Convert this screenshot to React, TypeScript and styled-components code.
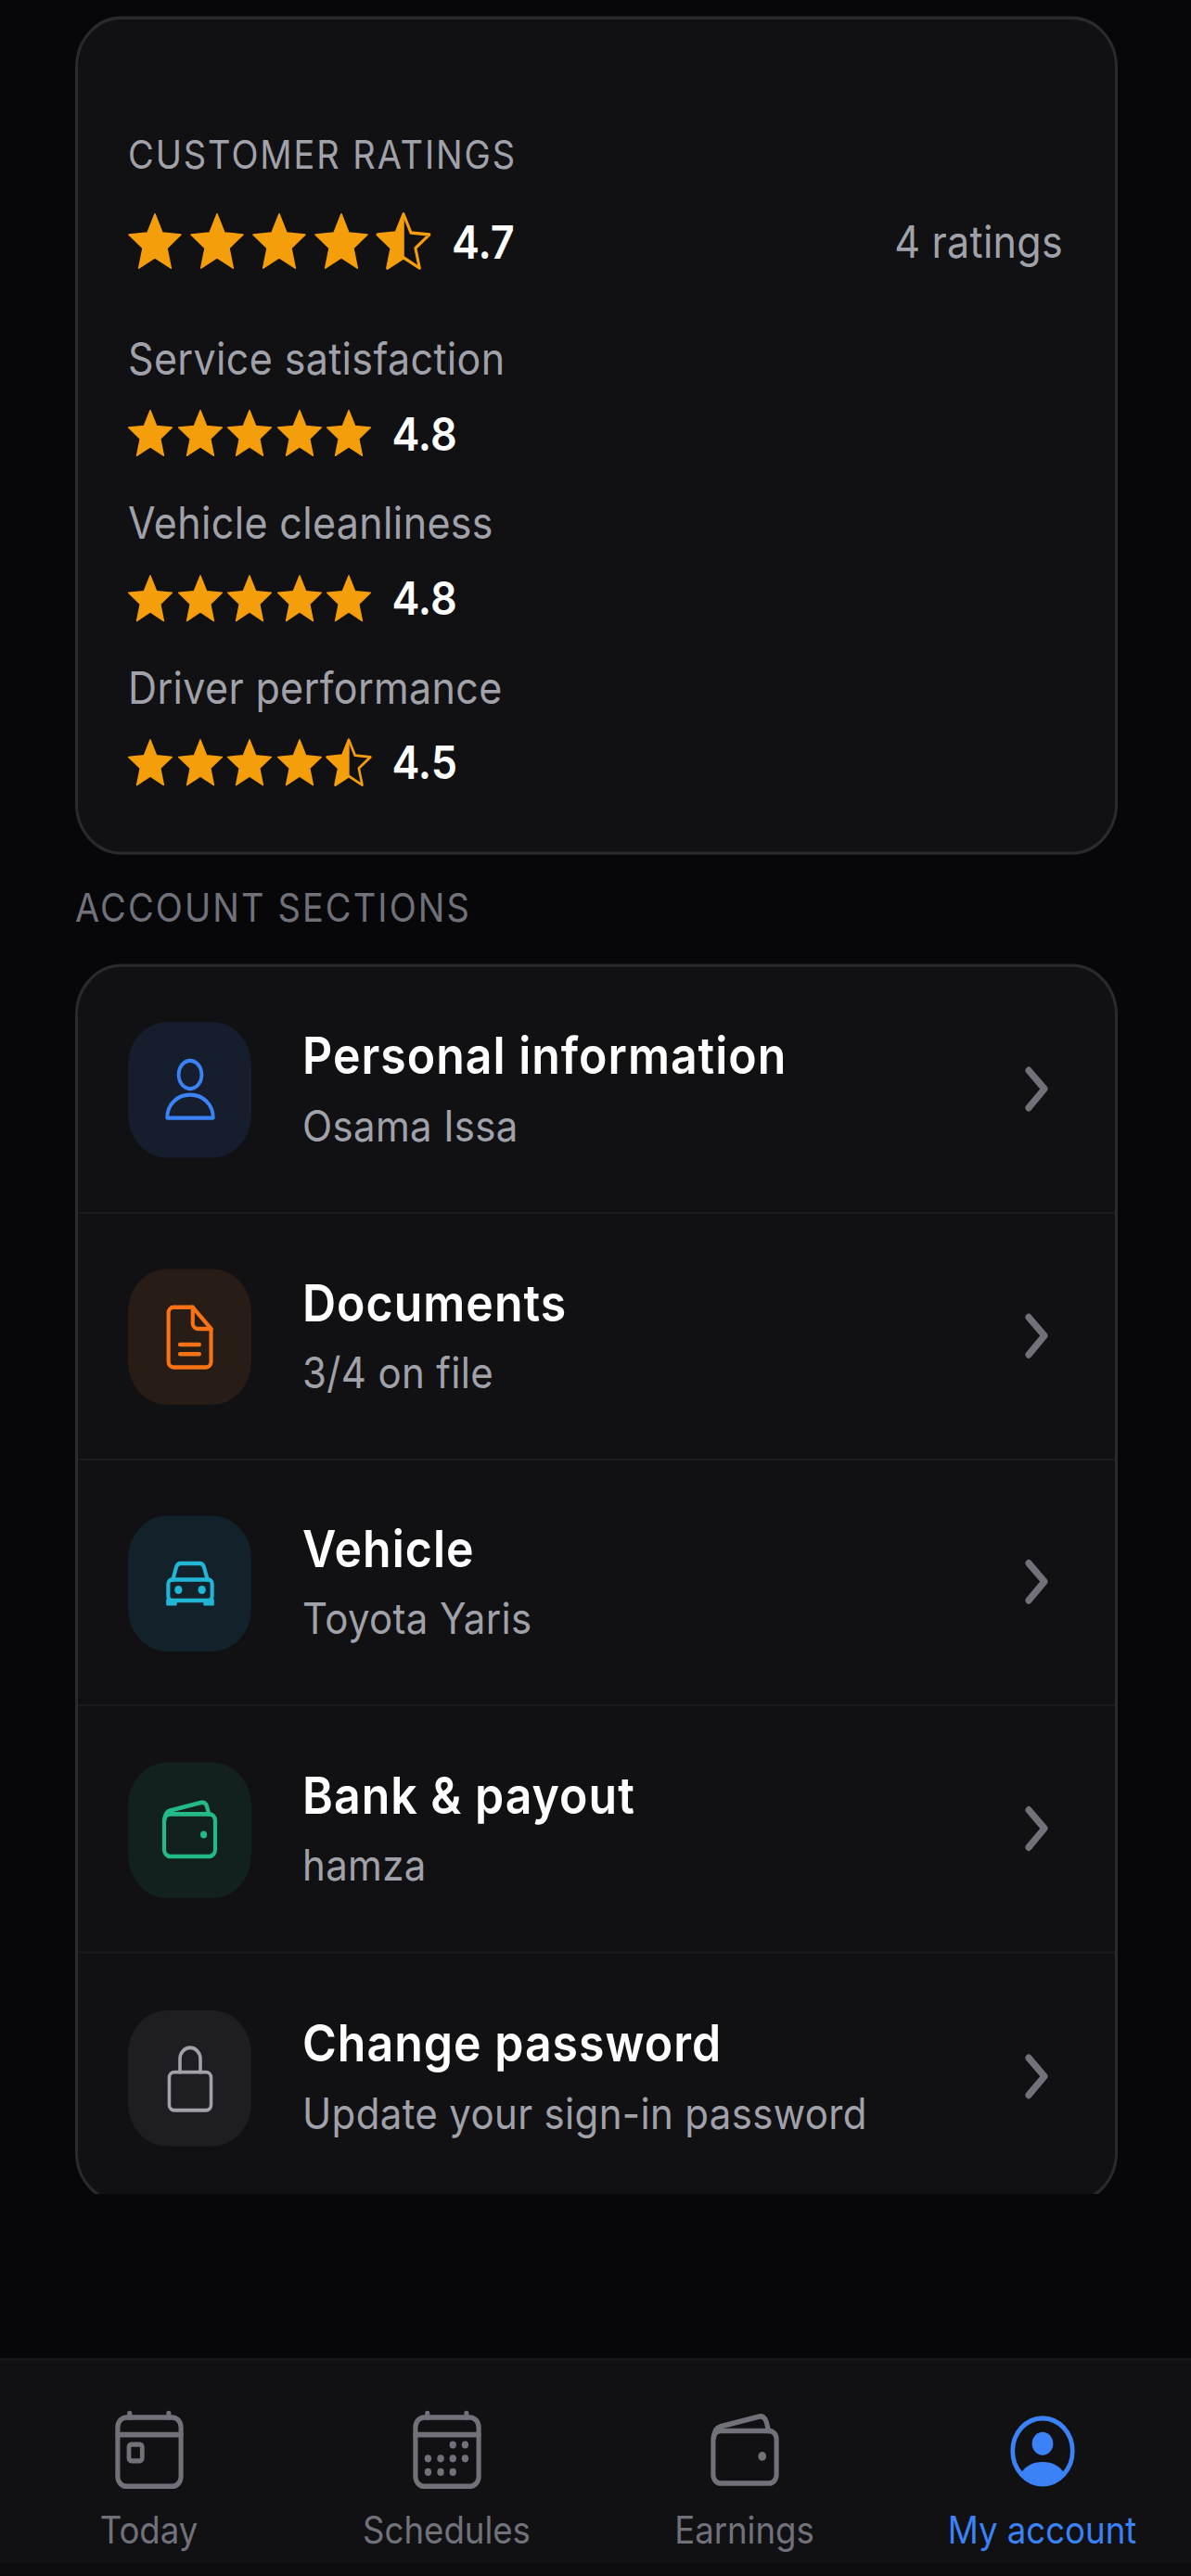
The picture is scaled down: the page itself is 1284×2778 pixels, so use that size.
import styled, { createGlobalStyle } from "styled-components";

const GlobalStyle = createGlobalStyle`
  html, body {
    margin: 0;
    height: 2778px;
    overflow: hidden;
    background: #07070a;
  }
  * { box-sizing: border-box; }
`;

// the whole capture is stretched 10% vertically, so the page is too
const Screen = styled.div`
  width: 1284px;
  height: 2525.45px;
  display: flex;
  flex-direction: column;
  transform: scaleY(1.1);
  transform-origin: top left;
  font-family: Inter, "Liberation Sans", sans-serif;
`;

const Scroll = styled.main`
  height: 2151px;
  overflow: hidden;
  padding: 16px 79px 0 81px;
  flex: none;
`;

const Spacer = styled.div`
  flex: 1;
`;

const Card = styled.section`
  background: #111114;
  border: 3px solid #2a2a2e;
  border-radius: 50px;
`;

const RatingsCard = styled(Card)`
  height: 821.5px;
  padding: 107px 56px 0 54px;
`;

const CardTitle = styled.h2`
  margin: 0;
  font-size: 38px;
  line-height: 50px;
  font-weight: 400;
  letter-spacing: 1.9px;
  color: #a1a1aa;
`;

const SummaryRow = styled.div`
  display: flex;
  align-items: center;
  height: 66px;
  margin: 28px 0 53px;
`;

const Stars = styled.div<{ $gap: number }>`
  display: flex;
  gap: ${(p) => p.$gap}px;
  margin-left: -2px;
`;

const Score = styled.span<{ $left: number }>`
  margin-left: ${(p) => p.$left}px;
  font-size: 45px;
  font-weight: 600;
  color: #fff;
`;

const Count = styled.span`
  margin-left: auto;
  font-size: 43px;
  letter-spacing: 0.3px;
  color: #a1a1aa;
`;

const Group = styled.div`
  margin-bottom: 31.2px;
`;

const GroupLabel = styled.div`
  font-size: 43px;
  line-height: 56px;
  letter-spacing: 0.35px;
  color: #a1a1aa;
`;

const GroupStars = styled.div`
  display: flex;
  align-items: center;
  height: 56px;
  margin-top: 18.2px;
`;

const SectionTitle = styled.h2`
  margin: 27.5px 0 30px;
  font-size: 38px;
  line-height: 50px;
  font-weight: 400;
  letter-spacing: 2.1px;
  color: #71717a;
`;

const Row = styled.div`
  display: flex;
  align-items: center;
  height: 241.8px;
  padding: 0 68px 0 54px;
  border-bottom: 2px solid #1b1b1f;
  &:last-child {
    border-bottom: none;
  }
`;

const IconBox = styled.div<{ $bg: string; $color: string }>`
  flex: none;
  width: 133px;
  height: 133px;
  margin-top: 2px;
  border-radius: 42px;
  display: flex;
  align-items: center;
  justify-content: center;
  background: ${(p) => p.$bg};
  color: ${(p) => p.$color};
`;

const RowText = styled.div`
  margin-left: 55px;
  display: flex;
  flex-direction: column;
  gap: 10px;
`;

const RowTitle = styled.div`
  font-size: 50px;
  line-height: 62px;
  font-weight: 600;
  letter-spacing: 1px;
  color: #fff;
`;

const RowSub = styled.div`
  font-size: 42px;
  line-height: 56px;
  letter-spacing: 0.35px;
  color: #a1a1aa;
`;

const Chevron = styled.svg`
  margin-left: auto;
  color: #71717a;
`;

const Nav = styled.nav`
  flex: none;
  height: 213.5px;
  display: grid;
  grid-template-columns: repeat(4, 1fr);
  padding-top: 45px;
  border-top: 2px solid #1b1b1f;
  background: linear-gradient(#111114 calc(100% - 12px), #0d0d10 calc(100% - 12px));
`;

const NavItem = styled.div<{ $active?: boolean }>`
  display: flex;
  flex-direction: column;
  align-items: center;
  gap: 9px;
  color: ${(p) => (p.$active ? "#3b82f6" : "#71717a")};
`;

const NavLabel = styled.span`
  font-size: 36.6px;
  line-height: 50px;
`;

const STAR = "M12 1.5l3.1 7.1 7.7.7-5.8 5.1 1.7 7.6L12 18l-6.7 4L7 14.4 1.2 9.3l7.7-.7z";
const STAR_LEFT = "M12 1.5V18l-6.7 4L7 14.4 1.2 9.3l7.7-.7z";

function Star({ size, half }: { size: number; half?: boolean }) {
  return (
    <svg width={size} height={size} viewBox="0 0 24 24" strokeLinejoin="round">
      {half ? (
        <>
          <path d={STAR} fill="none" stroke="#f59e0b" strokeWidth="1.2" />
          <path d={STAR_LEFT} fill="#f59e0b" stroke="#f59e0b" strokeWidth="0.6" />
        </>
      ) : (
        <path d={STAR} fill="#f59e0b" stroke="#f59e0b" strokeWidth="0.6" />
      )}
    </svg>
  );
}

function StarRow({ size, gap, half }: { size: number; gap: number; half?: boolean }) {
  return (
    <Stars $gap={gap}>
      {[0, 1, 2, 3].map((i) => (
        <Star key={i} size={size} />
      ))}
      <Star size={size} half={half} />
    </Stars>
  );
}

const stroke = {
  fill: "none",
  stroke: "currentColor",
  strokeLinecap: "round",
  strokeLinejoin: "round",
} as const;

function PersonIcon() {
  return (
    <svg width="66" height="66" viewBox="0 0 24 24" strokeWidth="1.4" {...stroke}>
      <ellipse cx="12" cy="6.4" rx="4.5" ry="5" />
      <path d="M3 21.8C3 17 7 13.6 12 13.6s9 3.4 9 8.2z" />
    </svg>
  );
}

function DocumentIcon() {
  return (
    <svg width="66" height="66" viewBox="0 0 24 24" strokeWidth="1.5" {...stroke}>
      <path d="M5.5 1.3H13L20.2 9v11.7a2 2 0 0 1-2 2H5.5a2 2 0 0 1-2-2V3.3a2 2 0 0 1 2-2z" />
      <path d="M13 1.3V7a2 2 0 0 0 2 2h5.2" />
      <path d="M8 14.6h7.6M8 18h7.6" />
    </svg>
  );
}

function CarIcon() {
  return (
    <svg width="66" height="66" viewBox="0 0 24 24" strokeWidth="1.5" {...stroke}>
      <path d="M5.2 10.8L6.6 6.2A1.8 1.8 0 0 1 8.3 5h7.4a1.8 1.8 0 0 1 1.7 1.2l1.4 4.6" />
      <rect x="3.4" y="10.8" width="17.2" height="7.4" rx="1.5" />
      <path d="M3 18v1.6h3.4V18.4M21 18v1.6h-3.4V18.4" fill="currentColor" strokeWidth="0.8" />
      <circle cx="7.4" cy="14.4" r="1.5" fill="currentColor" stroke="none" />
      <circle cx="16.6" cy="14.4" r="1.5" fill="currentColor" stroke="none" />
    </svg>
  );
}

function WalletIcon({ size }: { size: number }) {
  return (
    <svg width={size} height={size} viewBox="0 0 24 24" strokeWidth="1.4" {...stroke}>
      <rect x="2.7" y="6.6" width="18.6" height="14" rx="2.2" />
      <path d="M2.9 8.4c0-1.5.6-2.6 2-3L16 2.8c1.2-.3 2 .3 2.3 1.3l.7 2.5" />
      <circle cx="17.1" cy="13.4" r="1.2" fill="currentColor" stroke="none" />
    </svg>
  );
}

function LockIcon() {
  return (
    <svg width="66" height="66" viewBox="0 0 24 24" strokeWidth="1.3" overflow="visible" {...stroke}>
      <rect x="3.8" y="10" width="16.4" height="13.6" rx="2" />
      <path d="M8 10V5.3a4 4 0 0 1 8 0V10" />
    </svg>
  );
}

function CalendarFrame() {
  return (
    <>
      <rect x="2.7" y="3" width="18.6" height="18.4" rx="2.6" />
      <path d="M2.7 7.6h18.6M6.2 1.9V3M17.7 1.9V3" />
    </>
  );
}

function TodayIcon() {
  return (
    <svg width="88" height="88" viewBox="0 0 24 24" strokeWidth="1.4" {...stroke}>
      <CalendarFrame />
      <rect x="6" y="10.2" width="3.9" height="4.4" rx="0.7" strokeWidth="1.3" />
    </svg>
  );
}

const DOTS = [
  [13.7, 10.3], [17.3, 10.3],
  [6.4, 14], [10.1, 14], [13.7, 14], [17.3, 14],
  [6.4, 17.6], [10.1, 17.6], [13.7, 17.6],
];

function SchedulesIcon() {
  return (
    <svg width="88" height="88" viewBox="0 0 24 24" strokeWidth="1.4" {...stroke}>
      <CalendarFrame />
      {DOTS.map(([x, y]) => (
        <circle key={`${x}-${y}`} cx={x} cy={y} r="1" fill="currentColor" stroke="none" />
      ))}
    </svg>
  );
}

function AccountIcon() {
  return (
    <svg width="88" height="88" viewBox="0 0 24 24">
      <circle cx="12" cy="12" r="8.8" fill="none" stroke="currentColor" strokeWidth="1.3" />
      <circle cx="12" cy="10" r="3.1" fill="currentColor" />
      <path
        d="M5.6 18c1.4-2.2 3.7-3.1 6.4-3.1s5 .9 6.4 3.1A8.8 8.8 0 0 1 12 20.8 8.8 8.8 0 0 1 5.6 18z"
        fill="currentColor"
      />
    </svg>
  );
}

const groups = [
  { label: "Service satisfaction", score: "4.8" },
  { label: "Vehicle cleanliness", score: "4.8" },
  { label: "Driver performance", score: "4.5", half: true },
];

const sections = [
  { title: "Personal information", sub: "Osama Issa", bg: "#161d2c", color: "#3b82f6", icon: <PersonIcon /> },
  { title: "Documents", sub: "3/4 on file", bg: "#271c16", color: "#f97316", icon: <DocumentIcon /> },
  { title: "Vehicle", sub: "Toyota Yaris", bg: "#13222a", color: "#22b5d6", icon: <CarIcon /> },
  { title: "Bank & payout", sub: "hamza", bg: "#12211e", color: "#22bb88", icon: <WalletIcon size={71} /> },
  { title: "Change password", sub: "Update your sign-in password", bg: "#1d1d22", color: "#a1a1aa", icon: <LockIcon /> },
];

export default function App() {
  return (
    <>
      <GlobalStyle />
      <Screen>
        <Scroll>
          <RatingsCard>
            <CardTitle>CUSTOMER RATINGS</CardTitle>
            <SummaryRow>
              <StarRow size={62} gap={5} half />
              <Score $left={21}>4.7</Score>
              <Count>4 ratings</Count>
            </SummaryRow>
            {groups.map((g) => (
              <Group key={g.label}>
                <GroupLabel>{g.label}</GroupLabel>
                <GroupStars>
                  <StarRow size={52} gap={1.6} half={g.half} />
                  <Score $left={20}>{g.score}</Score>
                </GroupStars>
              </Group>
            ))}
          </RatingsCard>
          <SectionTitle>ACCOUNT SECTIONS</SectionTitle>
          <Card>
            {sections.map((s) => (
              <Row key={s.title}>
                <IconBox $bg={s.bg} $color={s.color}>
                  {s.icon}
                </IconBox>
                <RowText>
                  <RowTitle>{s.title}</RowTitle>
                  <RowSub>{s.sub}</RowSub>
                </RowText>
                <Chevron width="30" height="46" viewBox="0 0 30 46" fill="none">
                  <path d="M5 4.5L22 22.5 5 41" stroke="currentColor" strokeWidth="7" strokeLinecap="round" strokeLinejoin="round" />
                </Chevron>
              </Row>
            ))}
          </Card>
        </Scroll>
        <Spacer />
        <Nav>
          <NavItem>
            <TodayIcon />
            <NavLabel>Today</NavLabel>
          </NavItem>
          <NavItem>
            <SchedulesIcon />
            <NavLabel>Schedules</NavLabel>
          </NavItem>
          <NavItem>
            <WalletIcon size={88} />
            <NavLabel>Earnings</NavLabel>
          </NavItem>
          <NavItem $active>
            <AccountIcon />
            <NavLabel>My account</NavLabel>
          </NavItem>
        </Nav>
      </Screen>
    </>
  );
}
